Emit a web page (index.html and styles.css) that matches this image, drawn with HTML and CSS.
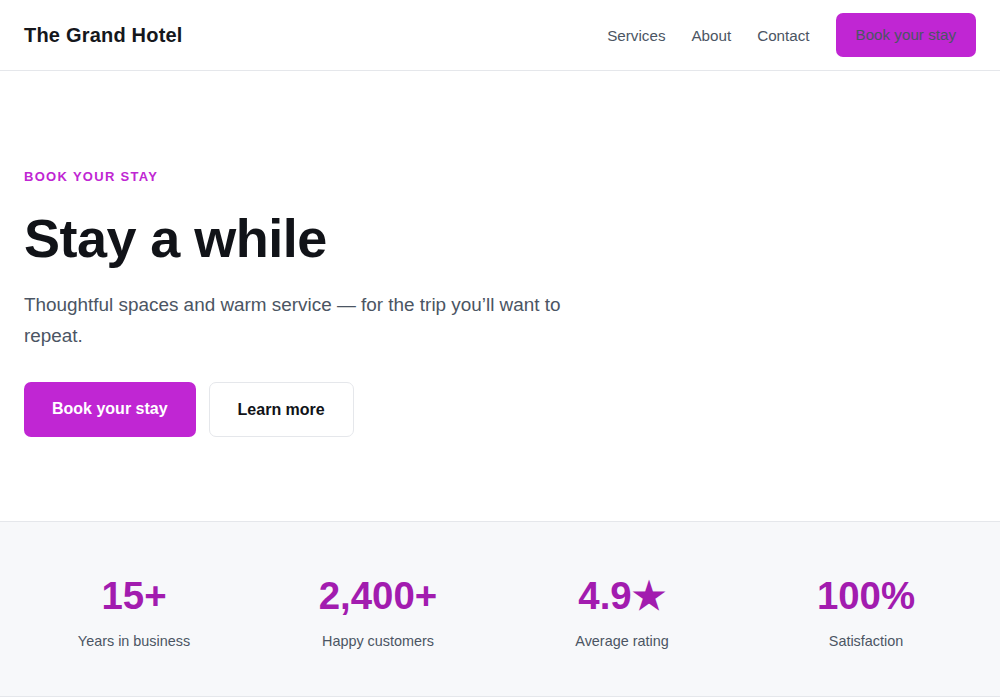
FILE: index.html
```html
<!DOCTYPE html>
<html lang="en">
<head>
  <meta charset="UTF-8" />
  <meta name="viewport" content="width=device-width, initial-scale=1.0" />
  <title>The Grand Hotel</title>
  <link rel="stylesheet" href="styles.css">
</head>
<body>
  <header class="site-header">
    <div class="logo">The Grand Hotel</div>
    <nav class="nav">
      <a href="#services">Services</a>
      <a href="#about">About</a>
      <a href="#contact">Contact</a>
      <a href="#book" class="nav-cta">Book your stay</a>
    </nav>
  </header>

  <section class="hero">
    <p class="eyebrow">Book your stay</p>
    <h1>Stay a while</h1>
    <p class="lead">Thoughtful spaces and warm service — for the trip you’ll want to repeat.</p>
    <div class="hero-actions">
      <a href="#book" class="btn btn-primary">Book your stay</a>
      <a href="#about" class="btn btn-outline">Learn more</a>
    </div>
  </section>

  <!-- Stats strip -->
  <section class="stats">
    <div class="stat">
      <div class="stat-value">15+</div>
      <div class="stat-label">Years in business</div>
    </div>
    <div class="stat">
      <div class="stat-value">2,400+</div>
      <div class="stat-label">Happy customers</div>
    </div>
    <div class="stat">
      <div class="stat-value">4.9★</div>
      <div class="stat-label">Average rating</div>
    </div>
    <div class="stat">
      <div class="stat-value">100%</div>
      <div class="stat-label">Satisfaction</div>
    </div>
  </section>
</body>
</html>
```

FILE: styles.css
```css
* {
  box-sizing: border-box;
}
body {
  font-family: 'Liberation Sans', Arial, sans-serif;
  background: #fff;
  color: #111318;
  margin: 0;
  padding: 0;
}
a {
  text-decoration: none;
}
.site-header {
  height: 71px;
  padding: 0 24px;
  display: flex;
  align-items: center;
  justify-content: space-between;
  border-bottom: 1px solid #e5e7eb;
}
.logo {
  font-size: 20px;
  font-weight: bold;
  letter-spacing: 0.2px;
  color: #15171c;
}
.nav {
  display: flex;
  align-items: center;
  gap: 26px;
}
.nav a {
  font-size: 15.2px;
  color: #4b5563;
}
.nav .nav-cta {
  background: #c026d3;
  color: #4b5563;
  padding: 12px 20px;
  line-height: 20px;
  border-radius: 7px;
}
.hero {
  padding: 96px 24px 84px;
}
.eyebrow {
  margin: 0;
  font-size: 13px;
  line-height: 20px;
  font-weight: bold;
  text-transform: uppercase;
  letter-spacing: 0.1em;
  color: #c026d3;
}
.hero h1 {
  margin: 20px 0 0;
  font-size: 54px;
  line-height: 1.15;
  letter-spacing: -0.01em;
  color: #111318;
}
.lead {
  margin: 20px 0 0;
  max-width: 576px;
  font-size: 18.9px;
  line-height: 31px;
  color: #4b5563;
}
.hero-actions {
  display: flex;
  gap: 13px;
  margin-top: 31px;
}
.btn {
  display: inline-block;
  font-size: 16px;
  font-weight: bold;
  line-height: 22px;
  padding: 16px 28px;
  border-radius: 7px;
}
.btn-primary {
  background: #c026d3;
  color: #fff;
  padding-bottom: 17px;
}
.btn-outline {
  background: #fff;
  color: #111318;
  border: 1px solid #e5e7eb;
  padding: 16px 28px;
  line-height: 21px;
}
.stats {
  background: #f7f8fa;
  border-top: 1px solid #e5e7eb;
  border-bottom: 1px solid #e5e7eb;
  padding: 51px 24px 44px;
  display: grid;
  grid-template-columns: repeat(4, 1fr);
  gap: 24px;
  text-align: center;
}
.stat-value {
  font-size: 38.4px;
  line-height: 46px;
  font-weight: bold;
  color: #a21caf;
}
.stat-label {
  margin-top: 11px;
  font-size: 14.4px;
  line-height: 22px;
  color: #4b5563;
}
```
